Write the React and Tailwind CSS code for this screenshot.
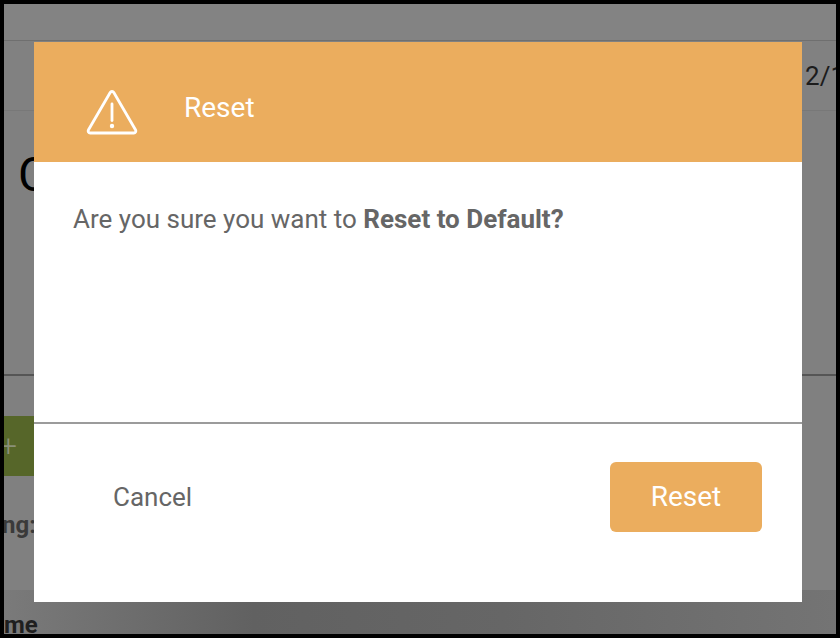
import { useState } from "react";

function WarningIcon() {
  return (
    <svg width="52" height="46" viewBox="0 0 52 46" fill="none" stroke="#ffffff" strokeWidth="2.8" strokeLinejoin="round" strokeLinecap="round">
      <path d="M26 2.5 a2 2 0 0 1 1.8 1 L49.6 41 a2 2 0 0 1 -1.8 3 H4.2 a2 2 0 0 1 -1.8 -3 L24.2 3.5 a2 2 0 0 1 1.8 -1 Z" />
      <path d="M26 15 V31.5" strokeWidth="2.8" />
      <circle cx="26" cy="37" r="2.2" fill="#ffffff" stroke="none" />
    </svg>
  );
}

function Background() {
  return (
    <div className="w-full h-full flex flex-col bg-[#808080]">
      <div className="h-[37px] shrink-0 bg-[#838383] border-b border-[#6f6f6f]" />
      <div className="h-[70px] shrink-0 flex items-center justify-end border-b border-[#787878] bg-[#818181] overflow-hidden">
        <span className="text-[26px] text-[#1c1c1c] whitespace-nowrap mt-[2px] -mr-[9px]">2/1</span>
      </div>
      <div className="h-[265px] shrink-0 border-b-2 border-[#555555] pl-[14px] pt-[40px] overflow-hidden">
        <span className="text-[48px] leading-none text-black">C</span>
      </div>
      <div className="h-[40px] shrink-0" />
      <div className="h-[60px] w-[40px] shrink-0 bg-[#566629] flex items-center">
        <span className="-ml-[4px] text-[30px] leading-none font-light text-[#8a9078]">+</span>
      </div>
      <div className="h-[114px] shrink-0 overflow-hidden pt-[36px]">
        <span className="block -ml-[2px] text-[24px] leading-[26px] font-bold text-[#3a3a3a] whitespace-nowrap">ng:</span>
      </div>
      <div className="flex-1 bg-[linear-gradient(90deg,#7a7a7a_0%,#616161_30%,#666666_60%,#747474_100%)] flex items-end overflow-hidden">
        <span className="text-[24px] leading-[26px] font-bold text-[#1f1f1f] -mb-[4px]">me</span>
      </div>
    </div>
  );
}

export default function App() {
  const [open, setOpen] = useState(true);

  return (
    <div className="w-[840px] h-[638px] bg-black p-1 font-['Roboto',sans-serif]">
      <div className="relative w-full h-full overflow-hidden">
        <Background />
        {open && (
          <div className="absolute left-[30px] top-[38px] w-[768px] h-[560px] bg-white flex flex-col">
            <div className="h-[120px] shrink-0 bg-[#ebad5e] flex items-center pl-[52px] pt-[20px] gap-[46px] text-white">
              <WarningIcon />
              <h2 className="-mt-[8px] text-[28px] font-normal">Reset</h2>
            </div>
            <div className="flex-1 px-[39px] pt-[40px] text-[26px] leading-[34px] text-[#666666]">
              Are you sure you want to <b className="font-bold">Reset to Default?</b>
            </div>
            <div className="h-[180px] shrink-0 border-t-2 border-[#9b9b9b] flex items-start justify-between pl-[79px] pr-[40px] pt-[38px]">
              <button onClick={() => setOpen(false)} className="h-[70px] text-[26px] text-[#666666]">Cancel</button>
              <button className="w-[152px] h-[70px] rounded-[6px] bg-[#ebad5e] text-[28px] font-normal text-white">Reset</button>
            </div>
          </div>
        )}
      </div>
    </div>
  );
}
